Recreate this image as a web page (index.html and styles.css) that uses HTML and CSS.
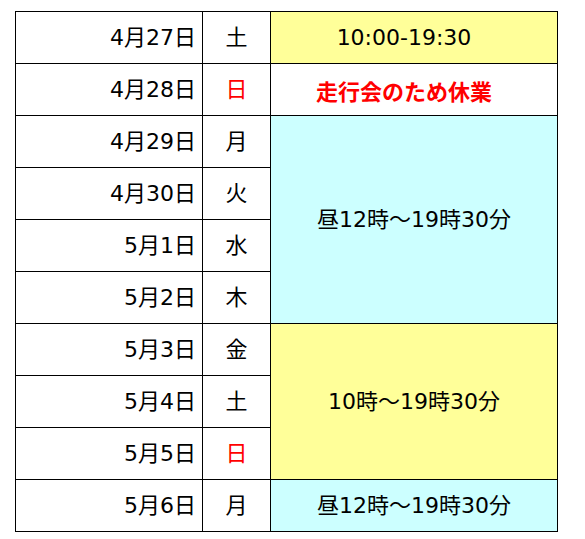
FILE: index.html
```html
<!DOCTYPE html>
<html lang="ja">
<head>
<meta charset="utf-8">
<link rel="stylesheet" href="styles.css">
</head>
<body>
<table class="schedule">
  <colgroup>
    <col class="c-date">
    <col class="c-day">
    <col class="c-hours">
  </colgroup>
  <tr>
    <td class="date">4月27日</td>
    <td class="day">土</td>
    <td class="hours yellow shift">10:00-19:30</td>
  </tr>
  <tr>
    <td class="date">4月28日</td>
    <td class="day red">日</td>
    <td class="hours closed shift">走行会のため休業</td>
  </tr>
  <tr>
    <td class="date">4月29日</td>
    <td class="day">月</td>
    <td class="hours cyan" rowspan="4">昼12時～19時30分</td>
  </tr>
  <tr>
    <td class="date">4月30日</td>
    <td class="day">火</td>
  </tr>
  <tr>
    <td class="date">5月1日</td>
    <td class="day">水</td>
  </tr>
  <tr>
    <td class="date">5月2日</td>
    <td class="day">木</td>
  </tr>
  <tr>
    <td class="date">5月3日</td>
    <td class="day">金</td>
    <td class="hours yellow" rowspan="3">10時～19時30分</td>
  </tr>
  <tr>
    <td class="date">5月4日</td>
    <td class="day">土</td>
  </tr>
  <tr>
    <td class="date">5月5日</td>
    <td class="day red">日</td>
  </tr>
  <tr>
    <td class="date">5月6日</td>
    <td class="day">月</td>
    <td class="hours cyan">昼12時～19時30分</td>
  </tr>
</table>
</body>
</html>
```
FILE: styles.css
```css
html, body {
  margin: 0;
  background: #ffffff;
}
body {
  padding: 11px 0 0 15px;
  font-family: "DejaVu Sans", "Noto Sans CJK JP", sans-serif;
  font-size: 22px;
  color: #000;
}
.schedule {
  border-collapse: collapse;
  table-layout: fixed;
  width: 542px;
}
.c-date { width: 187px; }
.c-day { width: 68px; }
.c-hours { width: 287px; }
.schedule td {
  border: 1px solid #000;
  height: 52px;
  padding: 0;
  box-sizing: border-box;
  line-height: 1;
}
.date {
  text-align: right;
  padding-right: 6px !important;
}
.day {
  text-align: center;
}
.hours {
  text-align: center;
}
.schedule td.shift {
  padding-right: 20px;
}
.red { color: #ff0000; }
.closed {
  color: #ff0000;
  font-weight: bold;
  font-family: "Noto Sans CJK JP", sans-serif;
}
.yellow { background: #ffff99; }
.cyan { background: #ccffff; }
```
